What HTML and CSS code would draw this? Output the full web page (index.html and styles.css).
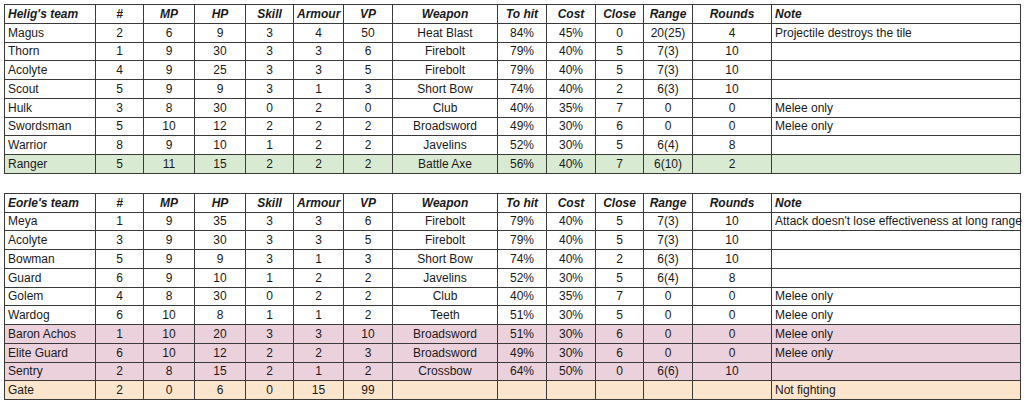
FILE: index.html
```html
<!DOCTYPE html>
<html>
<head>
<meta charset="utf-8">
<link rel="stylesheet" href="styles.css">
</head>
<body>
<div class="page">
<table class="sheet">
<colgroup>
<col class="c-name"><col class="c-num"><col class="c-mp"><col class="c-hp"><col class="c-skill"><col class="c-armour"><col class="c-vp"><col class="c-weapon"><col class="c-hit"><col class="c-cost"><col class="c-close"><col class="c-range"><col class="c-rounds"><col class="c-note">
</colgroup>
<thead>
<tr><th class="l">Helig's team</th><th>#</th><th>MP</th><th>HP</th><th>Skill</th><th>Armour</th><th>VP</th><th>Weapon</th><th>To hit</th><th>Cost</th><th>Close</th><th>Range</th><th>Rounds</th><th class="l">Note</th></tr>
</thead>
<tbody>
<tr><td class="l">Magus</td><td>2</td><td>6</td><td>9</td><td>3</td><td>4</td><td>50</td><td>Heat Blast</td><td>84%</td><td>45%</td><td>0</td><td>20(25)</td><td>4</td><td class="l">Projectile destroys the tile</td></tr>
<tr><td class="l">Thorn</td><td>1</td><td>9</td><td>30</td><td>3</td><td>3</td><td>6</td><td>Firebolt</td><td>79%</td><td>40%</td><td>5</td><td>7(3)</td><td>10</td><td class="l"></td></tr>
<tr><td class="l">Acolyte</td><td>4</td><td>9</td><td>25</td><td>3</td><td>3</td><td>5</td><td>Firebolt</td><td>79%</td><td>40%</td><td>5</td><td>7(3)</td><td>10</td><td class="l"></td></tr>
<tr><td class="l">Scout</td><td>5</td><td>9</td><td>9</td><td>3</td><td>1</td><td>3</td><td>Short Bow</td><td>74%</td><td>40%</td><td>2</td><td>6(3)</td><td>10</td><td class="l"></td></tr>
<tr><td class="l">Hulk</td><td>3</td><td>8</td><td>30</td><td>0</td><td>2</td><td>0</td><td>Club</td><td>40%</td><td>35%</td><td>7</td><td>0</td><td>0</td><td class="l">Melee only</td></tr>
<tr><td class="l">Swordsman</td><td>5</td><td>10</td><td>12</td><td>2</td><td>2</td><td>2</td><td>Broadsword</td><td>49%</td><td>30%</td><td>6</td><td>0</td><td>0</td><td class="l">Melee only</td></tr>
<tr><td class="l">Warrior</td><td>8</td><td>9</td><td>10</td><td>1</td><td>2</td><td>2</td><td>Javelins</td><td>52%</td><td>30%</td><td>5</td><td>6(4)</td><td>8</td><td class="l"></td></tr>
<tr class="green"><td class="l">Ranger</td><td>5</td><td>11</td><td>15</td><td>2</td><td>2</td><td>2</td><td>Battle Axe</td><td>56%</td><td>40%</td><td>7</td><td>6(10)</td><td>2</td><td class="l"></td></tr>
</tbody>
</table>

<table class="sheet">
<colgroup>
<col class="c-name"><col class="c-num"><col class="c-mp"><col class="c-hp"><col class="c-skill"><col class="c-armour"><col class="c-vp"><col class="c-weapon"><col class="c-hit"><col class="c-cost"><col class="c-close"><col class="c-range"><col class="c-rounds"><col class="c-note">
</colgroup>
<thead>
<tr><th class="l">Eorle's team</th><th>#</th><th>MP</th><th>HP</th><th>Skill</th><th>Armour</th><th>VP</th><th>Weapon</th><th>To hit</th><th>Cost</th><th>Close</th><th>Range</th><th>Rounds</th><th class="l">Note</th></tr>
</thead>
<tbody>
<tr><td class="l">Meya</td><td>1</td><td>9</td><td>35</td><td>3</td><td>3</td><td>6</td><td>Firebolt</td><td>79%</td><td>40%</td><td>5</td><td>7(3)</td><td>10</td><td class="l">Attack doesn't lose effectiveness at long range</td></tr>
<tr><td class="l">Acolyte</td><td>3</td><td>9</td><td>30</td><td>3</td><td>3</td><td>5</td><td>Firebolt</td><td>79%</td><td>40%</td><td>5</td><td>7(3)</td><td>10</td><td class="l"></td></tr>
<tr><td class="l">Bowman</td><td>5</td><td>9</td><td>9</td><td>3</td><td>1</td><td>3</td><td>Short Bow</td><td>74%</td><td>40%</td><td>2</td><td>6(3)</td><td>10</td><td class="l"></td></tr>
<tr><td class="l">Guard</td><td>6</td><td>9</td><td>10</td><td>1</td><td>2</td><td>2</td><td>Javelins</td><td>52%</td><td>30%</td><td>5</td><td>6(4)</td><td>8</td><td class="l"></td></tr>
<tr><td class="l">Golem</td><td>4</td><td>8</td><td>30</td><td>0</td><td>2</td><td>2</td><td>Club</td><td>40%</td><td>35%</td><td>7</td><td>0</td><td>0</td><td class="l">Melee only</td></tr>
<tr><td class="l">Wardog</td><td>6</td><td>10</td><td>8</td><td>1</td><td>1</td><td>2</td><td>Teeth</td><td>51%</td><td>30%</td><td>5</td><td>0</td><td>0</td><td class="l">Melee only</td></tr>
<tr class="pink"><td class="l">Baron Achos</td><td>1</td><td>10</td><td>20</td><td>3</td><td>3</td><td>10</td><td>Broadsword</td><td>51%</td><td>30%</td><td>6</td><td>0</td><td>0</td><td class="l">Melee only</td></tr>
<tr class="pink"><td class="l">Elite Guard</td><td>6</td><td>10</td><td>12</td><td>2</td><td>2</td><td>3</td><td>Broadsword</td><td>49%</td><td>30%</td><td>6</td><td>0</td><td>0</td><td class="l">Melee only</td></tr>
<tr class="pink"><td class="l">Sentry</td><td>2</td><td>8</td><td>15</td><td>2</td><td>1</td><td>2</td><td>Crossbow</td><td>64%</td><td>50%</td><td>0</td><td>6(6)</td><td>10</td><td class="l"></td></tr>
<tr class="orange"><td class="l">Gate</td><td>2</td><td>0</td><td>6</td><td>0</td><td>15</td><td>99</td><td></td><td></td><td></td><td></td><td></td><td></td><td class="l">Not fighting</td></tr>
</tbody>
</table>
</div>
</body>
</html>
```

FILE: styles.css
```css
html, body {
  margin: 0;
  padding: 0;
  background: #ffffff;
}

.page {
  padding: 4px 0 0 4px;
  display: flex;
  flex-direction: column;
  gap: 19px;
}

.sheet {
  border-collapse: collapse;
  table-layout: fixed;
  width: 1017px;
  font-family: "Liberation Sans", Arial, sans-serif;
  font-size: 12px;
  color: #1a1a1a;
}

.sheet th,
.sheet td {
  border: 1px solid #3a3a3a;
  height: 17.75px;
  padding: 0 3px;
  text-align: center;
  white-space: nowrap;
  overflow: visible;
  line-height: 14px;
  vertical-align: middle;
}

.sheet th {
  font-weight: bold;
  font-style: italic;
}

.sheet .l {
  text-align: left;
}

.green td { background: #d9ead3; }
.pink td { background: #ead1dc; }
.orange td { background: #fce5cd; }

.c-name { width: 91px; }
.c-num { width: 48px; }
.c-mp { width: 51px; }
.c-hp { width: 51px; }
.c-skill { width: 48px; }
.c-armour { width: 50px; }
.c-vp { width: 49px; }
.c-weapon { width: 105px; }
.c-hit { width: 49px; }
.c-cost { width: 49px; }
.c-close { width: 48px; }
.c-range { width: 49px; }
.c-rounds { width: 79px; }
.c-note { width: 249px; }
```
